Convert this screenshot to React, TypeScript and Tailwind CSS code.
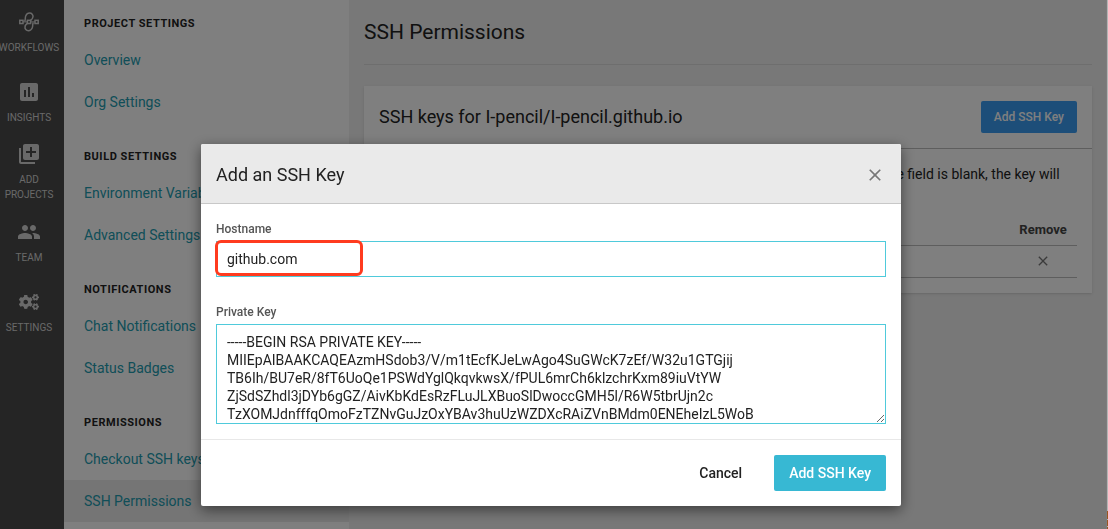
import { useState } from "react";
import type { ReactNode } from "react";
import { MdInsertChart, MdLibraryAdd, MdPeople, MdClose } from "react-icons/md";
import { FaCogs } from "react-icons/fa";

function WorkflowsIcon() {
  return (
    <svg viewBox="0 0 20 20" className="size-5" fill="none" stroke="currentColor" strokeWidth="1.5">
      <rect x="0.8" y="8.3" width="3.2" height="3.2" />
      <rect x="8.4" y="8.3" width="3.2" height="3.2" />
      <rect x="16" y="8.3" width="3.2" height="3.2" />
      <path d="M4 9.9H8.4M11.6 9.9H16" strokeWidth="1" />
      <path d="M5.6 9.4C6.8 8 5.8 6 6.8 3.8C7.6 2 9 1.1 10.6 1.1C12.8 1.1 14.2 2.8 14 4.8C13.8 6.6 12.8 7.6 11.4 8.6" />
      <path d="M14.4 10.4C13.2 11.8 14.2 13.8 13.2 16C12.4 17.8 11 18.7 9.4 18.7C7.2 18.7 5.8 17 6 15C6.2 13.2 7.2 12.2 8.6 11.2" />
    </svg>
  );
}

const railItems: { label: string; icon: ReactNode; spacing: string }[] = [
  { label: "WORKFLOWS", icon: <WorkflowsIcon />, spacing: "h-[70px]" },
  { label: "INSIGHTS", icon: <MdInsertChart className="size-6" />, spacing: "h-[62px]" },
  { label: "ADD PROJECTS", icon: <MdLibraryAdd className="size-6" />, spacing: "h-[78px]" },
  { label: "TEAM", icon: <MdPeople className="size-6" />, spacing: "h-[70px]" },
  { label: "SETTINGS", icon: <FaCogs className="size-5" />, spacing: "h-[62px]" },
];

const menu = [
  { title: "PROJECT SETTINGS", items: ["Overview", "Org Settings"] },
  { title: "BUILD SETTINGS", items: ["Environment Variables", "Advanced Settings"] },
  { title: "NOTIFICATIONS", items: ["Chat Notifications", "Status Badges"] },
  { title: "PERMISSIONS", items: ["Checkout SSH keys", "SSH Permissions"] },
];

const initialKey = `-----BEGIN RSA PRIVATE KEY-----
MIIEpAIBAAKCAQEAzmHSdob3/V/m1tEcfKJeLwAgo4SuGWcK7zEf/W32u1GTGjij
TB6Ih/BU7eR/8fT6UoQe1PSWdYglQkqvkwsX/fPUL6mrCh6klzchrKxm89iuVtYW
ZjSdSZhdl3jDYb6gGZ/AivKbKdEsRzFLuJLXBuoSlDwoccGMH5l/R6W5tbrUjn2c
TzXOMJdnfffqOmoFzTZNvGuJzOxYBAv3huUzWZDXcRAiZVnBMdm0ENEheIzL5WoB`;

function Rail() {
  return (
    <nav className="w-16 shrink-0 bg-[#4a4a4a] pt-2.5 pr-1.5 text-[#d2d2d2]">
      {railItems.map((item) => (
        <a key={item.label} href="#" className={`flex flex-col items-center ${item.spacing}`}>
          <span className="flex h-6 items-center">{item.icon}</span>
          <span className="mt-1.5 text-center text-[10px] leading-[15px]">{item.label}</span>
        </a>
      ))}
    </nav>
  );
}

function SettingsMenu() {
  return (
    <aside className="w-[285px] shrink-0 bg-white">
      {menu.map((group) => (
        <section key={group.title} className="mb-2.5 pt-[9px]">
          <h2 className="px-5 py-1.5 text-[11px] leading-[18px] font-bold tracking-wider text-[#222]">{group.title}</h2>
          <ul>
            {group.items.map((item) => (
              <li key={item}>
                <a
                  href="#"
                  className={`flex h-[42px] items-center px-5 text-sm whitespace-nowrap text-[#229cb0] ${item === "SSH Permissions" ? "bg-[#eaeaea]" : ""}`}
                >
                  {item}
                </a>
              </li>
            ))}
          </ul>
        </section>
      ))}
    </aside>
  );
}

function Permissions() {
  return (
    <main className="min-w-0 grow border-r border-[#fafafa] bg-[#f0f0f0] pr-3.5 pl-[15px]">
      <h1 className="border-b border-[#dcdcdc] py-[17px] text-[21px] leading-[30px] text-[#222]">SSH Permissions</h1>
      <section className="mt-[21px] bg-white shadow">
        <div className="flex items-center justify-between border-b border-[#bdbdbd] p-[15px]">
          <h2 className="text-lg text-[#222]">SSH keys for I-pencil/I-pencil.github.io</h2>
          <button type="button" className="h-8 rounded-xs bg-[#3a9df2] px-[13px] text-xs font-medium text-white">
            Add SSH Key
          </button>
        </div>
        <div className="px-[15px] pt-[13px] pb-[15px] text-sm text-[#222]">
          <p className="leading-6">
            Add keys to the build VMs that you need to deploy to your machines. If the hostname field is blank, the key will
            be used for all hosts.
          </p>
          <table className="mt-[5px] w-full">
            <thead>
              <tr className="h-[30px] border-b border-[#bdbdbd] text-[13px] text-[#444]">
                <th className="pt-0.5 text-left">Hostname</th>
                <th className="pt-0.5 text-left">Fingerprint</th>
                <th className="w-[68px] pt-0.5">Remove</th>
              </tr>
            </thead>
            <tbody>
              <tr className="h-8 border-b border-[#bdbdbd]">
                <td />
                <td />
                <td>
                  <button type="button" aria-label="Remove key" className="mx-auto block text-[#777]">
                    <MdClose className="size-4" />
                  </button>
                </td>
              </tr>
            </tbody>
          </table>
        </div>
      </section>
    </main>
  );
}

function AddKeyDialog() {
  const [host, setHost] = useState("github.com");
  const [key, setKey] = useState(initialKey);
  return (
    <div className="fixed inset-y-0 right-px left-0 flex items-start justify-center bg-black/50 pt-36 pr-[21px] pl-4">
      <div
        role="dialog"
        aria-labelledby="dialog-title"
        className="w-full max-w-[700px] overflow-hidden rounded-xs bg-white text-[#222] shadow-[0_4px_14px_rgba(0,0,0,0.5)]"
      >
        <header className="flex h-15 items-center justify-between border-b border-[#c8c8c8] bg-[#eaeaea] pt-0.5 pr-4 pl-[15px]">
          <h2 id="dialog-title" className="text-lg">Add an SSH Key</h2>
          <button type="button" aria-label="Close" className="text-[#777]">
            <MdClose className="size-5" />
          </button>
        </header>
        <form id="key-form" className="px-[15px] pt-4 pb-[15px]">
          <label htmlFor="host" className="block text-xs leading-[18px] font-medium text-[#555]">Hostname</label>
          <div className="relative mt-[3px]">
            <input
              id="host"
              value={host}
              onChange={(e) => setHost(e.target.value)}
              className="block h-9 w-full border border-[#4fcadb] px-2.5 text-sm outline-none"
            />
            <span className="pointer-events-none absolute -top-px bottom-px -left-px w-[148px] rounded-md border-3 border-[#ff3b1f]" />
          </div>
          <label htmlFor="key" className="mt-[26px] block text-xs leading-[18px] font-medium text-[#555]">Private Key</label>
          <textarea
            id="key"
            value={key}
            onChange={(e) => setKey(e.target.value)}
            spellCheck={false}
            className="mt-[3px] block h-25 w-full resize overflow-hidden border border-[#4fcadb] px-2.5 py-2 text-sm leading-[18px] outline-none"
          />
        </form>
        <footer className="flex items-center justify-end gap-[17px] border-t border-[#e8e8e8] p-[15px]">
          <button type="button" className="h-9 px-[15px] text-sm font-medium">Cancel</button>
          <button type="submit" form="key-form" className="h-9 rounded-xs bg-[#37b8d3] px-[15px] text-sm font-medium text-white">
            Add SSH Key
          </button>
        </footer>
      </div>
    </div>
  );
}

function EdgeStrip() {
  return (
    <div className="flex w-px shrink-0 flex-col justify-end gap-px bg-[#b4b4b4]">
      <span className="h-2 bg-[#9a5420]" />
      <span className="h-1.5 bg-[#9a5420]" />
      <span className="h-0.5 bg-[#9a5420]" />
    </div>
  );
}

export default function App() {
  return (
    <div className="flex h-screen overflow-hidden font-[Roboto,sans-serif]">
      <Rail />
      <SettingsMenu />
      <Permissions />
      <EdgeStrip />
      <AddKeyDialog />
    </div>
  );
}
